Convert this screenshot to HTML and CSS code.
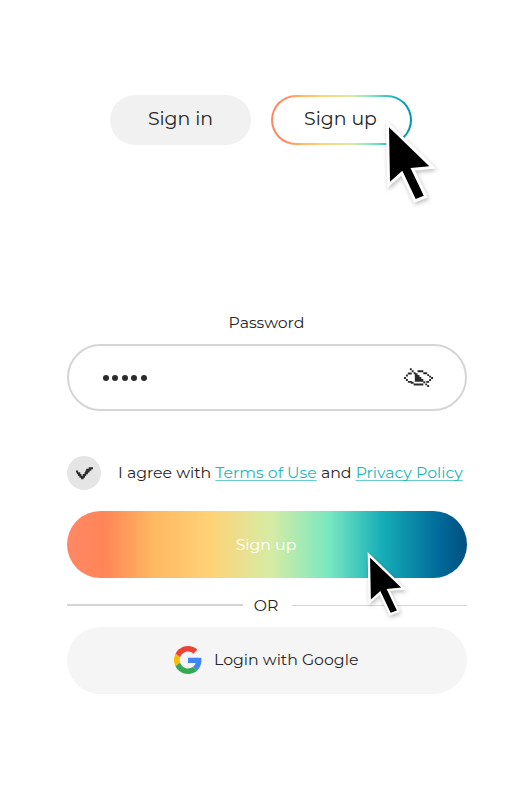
FILE: index.html
```
<!DOCTYPE html>
<html lang="en">
<head>
<meta charset="utf-8">
<title>Sign up</title>
<link rel="stylesheet" href="styles.css">
</head>
<body>
<main class="page">
  <nav class="switch">
    <button class="pill pill-muted">Sign in</button>
    <button class="pill pill-outline">Sign up</button>
    <svg class="cursor cursor-large" viewBox="0 0 50 85" aria-hidden="true">
      <path d="M4 7.300L5 61.700L17.300 50.700L30.700 79L38.800 75.800L25.500 48L44.300 46.200Z"/>
    </svg>
  </nav>
  <form class="form">
    <label class="label">Password</label>
    <div class="field">
      <span class="dots"><i></i><i></i><i></i><i></i><i></i></span>
      <svg class="eye" viewBox="0 0 15 10" aria-hidden="true">
        <path d="M3 0h1v1h-1zM4 1h1v1h-1zM7 1h3v1h-3zM2 2.200h2v1h-2zM5 2h1v1h-1zM10 2h2v1h-2zM1 3.200h1v1h-1zM12 3h1v1h-1zM13 3.800h1v1h-1zM0 4.500h1v1h-1zM14 4.500h1v1h-1zM1 5.500h1v1h-1zM13 5.500h1v1h-1zM2 6.500h2v1h-2zM11.500 6.500h1.500v1h-1.500zM3.500 7h1.500v1h-1.500zM5 7.800h5v1.100h-5zM10 6.700h1v1h-1zM11 7.800h1v1h-1zM12 8.600h1v1h-1zM5.600 2.500h1.400v1h1v1h1v1h1v1.500h-4.400z"/>
      </svg>
    </div>
    <div class="agree">
      <span class="check">
        <svg viewBox="0 0 10 7.500" aria-hidden="true"><path d="M7.500 0h2.500v1.200h-2.500zM6 1h3v1.200h-3zM0 2h1.200v1.200h-1.200zM5.500 2h2.500v1.200h-2.500zM.5 3h2v1.200h-2zM5 3h2v1.200h-2zM1.200 4h2v1.200h-2zM4 4h2v1.200h-2zM2 5h3.300v1.200h-3.300zM3 6h1.500v1.200h-1.500z"/></svg>
      </span>
      <span class="terms">I agree with <a>Terms of Use</a> and <a>Privacy Policy</a></span>
    </div>
    <button class="submit" type="button">Sign up</button>
    <div class="divider"><span class="rule rule-left"></span><span class="or">OR</span><span class="rule rule-right"></span></div>
    <button class="google" type="button">
      <svg class="logo" viewBox="0 0 48 48" aria-hidden="true">
        <path fill="#ea4335" d="M24 9.500c3.540 0 6.710 1.220 9.210 3.600l6.850-6.850C35.900 2.380 30.470 0 24 0 14.620 0 6.510 5.380 2.560 13.220l7.980 6.190C12.430 13.720 17.740 9.500 24 9.500z"/>
        <path fill="#4285f4" d="M46.980 24.550c0-1.570-.15-3.090-.38-4.550H24v9.020h12.940c-.58 2.960-2.260 5.480-4.780 7.180l7.730 6c4.510-4.180 7.090-10.360 7.090-17.650z"/>
        <path fill="#fbbc05" d="M10.530 28.590c-.48-1.450-.76-2.990-.76-4.590s.27-3.140.76-4.590l-7.980-6.190C.92 16.460 0 20.120 0 24s.92 7.540 2.560 10.780l7.970-6.190z"/>
        <path fill="#34a853" d="M24 48c6.480 0 11.930-2.130 15.890-5.810l-7.730-6c-2.150 1.450-4.920 2.300-8.160 2.300-6.260 0-11.570-4.220-13.470-9.910l-7.980 6.190C6.510 42.620 14.620 48 24 48z"/>
      </svg>
      <span>Login with Google</span>
    </button>
    <svg class="cursor cursor-small" viewBox="0 0 50 85" aria-hidden="true">
      <path d="M4 7.300L5 61.700L17.300 50.700L30.700 79L38.800 75.800L25.500 48L44.300 46.200Z"/>
    </svg>
  </form>
</main>
</body>
</html>
```
FILE: styles.css
```
* { box-sizing: border-box; }
body {
  margin: 0;
  background: #fff;
  color: #262626;
  font: 400 15.75px/20px Montserrat, Inter, sans-serif;
}
button { font: inherit; color: inherit; border: 0; padding: 0; }
.page { height: 809px; padding-top: 95px; overflow: hidden; }
.switch { position: relative; display: flex; gap: 20px; width: 301px; margin-left: 110px; }
.pill {
  flex: none;
  width: 141px; height: 50px; border-radius: 25px;
  font-size: 18.900px; padding-bottom: 2px;
}
.pill-muted { background: #f1f1f1; }
.pill-outline {
  border: 2px solid transparent;
  padding-right: 2px;
  background:
    linear-gradient(#fff, #fff) padding-box,
    linear-gradient(90deg, #ff8765, #ff8558 10%, #ffb962 22%, #ffd277 36%, #d6eca5 58%, #78e8c1 72%, #16adb8 90%, #0093ad 100%) border-box;
}
.cursor { position: absolute; overflow: visible; filter: drop-shadow(1px 2px 2px rgba(0, 0, 0, .25)); }
.cursor path {
  fill: #000; stroke: #fff; stroke-width: 6px;
  stroke-miterlimit: 8; paint-order: stroke;
}
.cursor-large { left: 275px; top: 25px; width: 50px; height: 85px; }
.form { position: relative; width: 400px; margin: 162px 0 0 67px; }
.label { display: block; height: 37px; text-align: center; line-height: 31px; padding-right: 1px; }
.field {
  display: flex; align-items: center; justify-content: space-between;
  height: 67px; padding: 0 32px 0 34px;
  border: 2px solid #d5d5d5; border-radius: 34px;
}
.dots { display: flex; gap: 3.400px; }
.dots i { width: 6px; height: 6px; border-radius: 50%; background: #2b2b2b; }
.eye { width: 29px; height: 20px; fill: #2b2b2b; }
.agree { display: flex; align-items: center; height: 34px; margin-top: 45px; }
.check {
  display: grid; place-items: center;
  width: 34px; height: 34px; border-radius: 50%; background: #e5e5e5;
}
.check svg { width: 17px; height: 13px; fill: #2b2b2b; }
.terms { margin-left: 17px; padding-bottom: 1px; white-space: nowrap; }
.terms a {
  color: #20b8b8;
  text-decoration: underline 1px #65cfcf;
  text-underline-offset: 2px;
  text-decoration-skip-ink: none;
}
.submit {
  display: block; width: 400px; height: 67px; margin-top: 21px;
  border-radius: 34px; color: #fff; padding-right: 2px;
  background: linear-gradient(90deg, #ff8765, #ff8558 9%, #ffb962 22%, #ffd277 36%, #d6eca5 51%, #78e8c1 65.500%, #16adb8 79%, #006a9a 93%, #00507f);
}
.divider { display: flex; align-items: center; height: 49px; padding-top: 5px; }
.rule { height: 2px; background: #d5d5d5; }
.rule-left { width: 176px; }
.rule-right { width: 175px; height: 1px; }
.or { flex: 1; text-align: center; padding: 1px 3px 0 0; }
.google {
  display: flex; align-items: center;
  width: 400px; height: 67px; border-radius: 34px; padding: 0 0 1px 107px; background: #f5f5f5;
}
.logo { width: 28px; height: 28px; margin-right: 12px; }
.cursor-small { left: 300px; top: 245px; width: 38.500px; height: 65.500px; }
```
